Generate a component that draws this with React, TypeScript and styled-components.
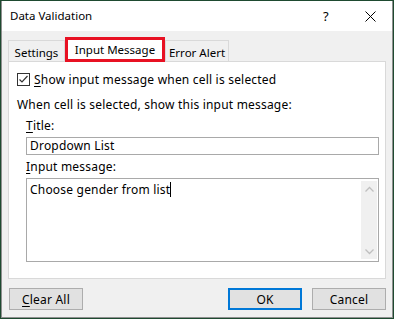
import React from "react";
import styled, { createGlobalStyle } from "styled-components";

const Global = createGlobalStyle`
  html, body { margin: 0; padding: 0; }
  body {
    background: #1e4a30;
    font-family: "Noto Sans", "Open Sans", sans-serif;
    font-size: 12px;
    letter-spacing: 0.2px;
    color: #000;
  }
`;

const Window = styled.div`
  margin: 1px 0 0 1px;
  width: 392px;
  height: 317px;
  box-sizing: border-box;
  border: 1px solid #8f8f8f;
  border-top: none;
  background: #f0f0f0;
  display: flex;
  flex-direction: column;
`;

const TitleBar = styled.div`
  height: 30px;
  background: #fff;
  display: flex;
  align-items: center;
  padding-left: 8px;
  flex: none;
`;

const TitleText = styled.div`
  flex: 1;
  font-size: 11.5px;
  letter-spacing: 0;
  line-height: 16px;
  margin-top: -1px;
`;

const CaptionButton = styled.div<{ $w: number }>`
  width: ${(p) => p.$w}px;
  height: 30px;
  display: flex;
  align-items: center;
  justify-content: center;
`;

const Body = styled.div`
  flex: 1;
  display: flex;
  flex-direction: column;
  padding: 9px 6px 0 6px;
`;

const TabRow = styled.div`
  display: flex;
  align-items: flex-end;
  height: 21px;
  position: relative;
  z-index: 1;
`;

const Tab = styled.div<{ $w: number; $active?: boolean }>`
  width: ${(p) => p.$w}px;
  box-sizing: border-box;
  height: ${(p) => (p.$active ? 25 : 21)}px;
  margin-bottom: ${(p) => (p.$active ? -1 : 0)}px;
  background: ${(p) => (p.$active ? "#fff" : "#f0f0f0")};
  border: ${(p) => (p.$active ? "3px solid #e81123" : "1px solid #d9d9d9")};
  border-bottom: ${(p) => (p.$active ? "3px solid #e81123" : "none")};
  display: flex;
  align-items: center;
  justify-content: center;
  font-size: 11.5px;
  letter-spacing: 0;
  padding-top: ${(p) => (p.$active ? 0 : 2)}px;
`;

const Panel = styled.div`
  height: 218px;
  box-sizing: border-box;
  background: #fff;
  border: 1px solid #d9d9d9;
  padding: 6px 7px 0 8px;
  display: flex;
  flex-direction: column;
`;

const CheckRow = styled.label`
  display: flex;
  align-items: center;
  gap: 4px;
  height: 18px;
  margin-top: 2px;
`;

const Box = styled.span`
  width: 13px;
  height: 13px;
  box-sizing: border-box;
  border: 1px solid #333;
  background: #fff;
  display: flex;
  align-items: center;
  justify-content: center;
`;

const Text = styled.div<{ $indent?: number; $mt?: number }>`
  margin-left: ${(p) => p.$indent ?? 0}px;
  margin-top: ${(p) => p.$mt ?? 0}px;
  line-height: 16px;
  height: 16px;
  white-space: nowrap;
`;

const U = styled.span`
  text-decoration: underline;
  text-underline-offset: 2px;
`;

const Field = styled.div`
  margin: 3px 0 0 9px;
  width: 353px;
  height: 18px;
  box-sizing: border-box;
  border: 1px solid #a9a9a9;
  padding: 0 3px;
  line-height: 15px;
  white-space: nowrap;
`;

const Area = styled.div`
  margin: 3px 0 0 9px;
  width: 353px;
  height: 84px;
  box-sizing: border-box;
  border: 1px solid #a9a9a9;
  display: flex;
  padding: 2px 1px 2px 3px;
`;

const AreaText = styled.div`
  flex: 1;
  line-height: 16px;
  padding-top: 1px;
  white-space: nowrap;
`;

const Caret = styled.span`
  display: inline-block;
  width: 1px;
  height: 15px;
  background: #000;
  vertical-align: -3px;
`;

const Scroll = styled.div`
  width: 16px;
  background: #f0f0f0;
  display: flex;
  flex-direction: column;
  justify-content: space-between;
  align-items: center;
  padding: 5px 0 4px;
`;

const ButtonRow = styled.div`
  display: flex;
  align-items: center;
  margin-top: 9px;
  padding-left: 1px;
`;

const Button = styled.div<{ $default?: boolean; $ml?: number }>`
  width: 74px;
  height: 22px;
  box-sizing: border-box;
  margin-left: ${(p) => p.$ml ?? 0}px;
  background: #e1e1e1;
  border: ${(p) => (p.$default ? "2px solid #0078d7" : "1px solid #adadad")};
  display: flex;
  align-items: center;
  justify-content: center;
  font-size: 12px;
`;

const Spacer = styled.div`
  flex: 1;
`;

const Chevron = ({ up }: { up?: boolean }) => (
  <svg width="9" height="6" viewBox="0 0 9 6">
    <path
      d={up ? "M0.5 5.5 L4.5 1.5 L8.5 5.5" : "M0.5 0.5 L4.5 4.5 L8.5 0.5"}
      fill="none"
      stroke="#bfbfbf"
      strokeWidth="1.3"
    />
  </svg>
);

export default function App() {
  return (
    <>
      <Global />
      <Window>
        <TitleBar>
          <TitleText>Data Validation</TitleText>
          <CaptionButton $w={44}>
            <span style={{ fontSize: 13 }}>?</span>
          </CaptionButton>
          <CaptionButton $w={44}>
            <svg width="11" height="11" viewBox="0 0 11 11">
              <path d="M0.5 0.5 L10.5 10.5 M10.5 0.5 L0.5 10.5" stroke="#000" strokeWidth="1" />
            </svg>
          </CaptionButton>
        </TitleBar>
        <Body>
          <TabRow>
            <Tab $w={57}>Settings</Tab>
            <Tab $w={100} $active>
              Input Message
            </Tab>
            <Tab $w={64}>Error Alert</Tab>
          </TabRow>
          <Panel>
            <CheckRow>
              <Box>
                <svg width="11" height="11" viewBox="0 0 11 11">
                  <path d="M1.5 5.5 L4 8 L9.5 2" fill="none" stroke="#333" strokeWidth="1.2" />
                </svg>
              </Box>
              <span>
                <U>S</U>how input message when cell is selected
              </span>
            </CheckRow>
            <Text $mt={9}>When cell is selected, show this input message:</Text>
            <Text $indent={9} $mt={5}>
              <U>T</U>itle:
            </Text>
            <Field>Dropdown List</Field>
            <Text $indent={9} $mt={4}>
              <U>I</U>nput message:
            </Text>
            <Area>
              <AreaText>
                Choose gender from list
                <Caret />
              </AreaText>
              <Scroll>
                <Chevron up />
                <Chevron />
              </Scroll>
            </Area>
          </Panel>
          <ButtonRow>
            <Button>
              <span>
                <U>C</U>lear All
              </span>
            </Button>
            <Spacer />
            <Button $default>OK</Button>
            <Button $ml={10}>Cancel</Button>
          </ButtonRow>
        </Body>
      </Window>
    </>
  );
}
